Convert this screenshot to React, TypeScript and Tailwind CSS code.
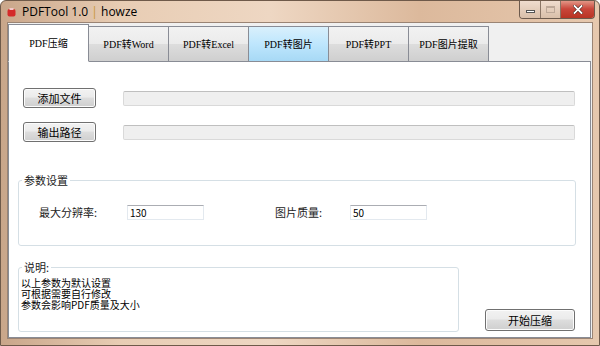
const tabs = ["PDF压缩", "PDF转Word", "PDF转Excel", "PDF转图片", "PDF转PPT", "PDF图片提取"];

function WinButton({ label, className }: { label: string; className?: string }) {
  return (
    <div
      className={
        "flex items-center justify-center rounded-[3px] border border-[#707070] bg-[linear-gradient(#f2f2f2_0%,#ebebeb_45%,#dddddd_50%,#cfcfcf_100%)] text-[11px] text-black shadow-[inset_0_0_0_1px_#fcfcfc] " +
        (className ?? "")
      }
    >
      {label}
    </div>
  );
}

function GroupBox({ title, className, children }: { title: string; className?: string; children?: React.ReactNode }) {
  return (
    <div className={"relative rounded-[3px] border border-[#d5dfe5] " + (className ?? "")}>
      <span className="absolute left-[3px] top-[-8px] bg-white px-[2px] text-[11px] leading-[14px] text-[#222]">{title}</span>
      {children}
    </div>
  );
}

export default function App() {
  return (
    <div className="flex h-[346px] w-[600px] flex-col overflow-hidden rounded-t-[6px] border border-[#6f5a4a] bg-[linear-gradient(90deg,#c9a68a_0%,#e8cdb4_20%,#eed7c3_45%,#dcb99c_70%,#e6c8ae_100%)] font-['Noto_Sans_CJK_SC',sans-serif]">
      {/* title bar */}
      <div className="relative flex h-[21px] items-center">
        <svg width="9" height="9" viewBox="0 0 9 9" className="ml-[6px] mt-[1px]">
          <rect x="0.5" y="1" width="8" height="7.5" rx="2" fill="#d42a2a" />
          <rect x="2.5" y="0" width="4" height="2" fill="#f3c7c7" />
        </svg>
        <span className="ml-[6px] font-['Open_Sans',sans-serif] text-[12px] leading-none text-black">
          PDFTool 1.0 <span className="text-[#c8973e]">|</span> howze
        </span>
        <div className="absolute right-[4px] top-[-1px] flex h-[19px] overflow-hidden rounded-b-[4px] border border-t-0 border-[#6c5a4d]">
          <div className="flex w-[21px] items-center justify-center border-r border-[#8a7565] bg-[linear-gradient(#f1ded0,#d9bfa9)]">
            <div className="mt-[4px] h-[3px] w-[9px] border border-[#555] bg-white" />
          </div>
          <div className="flex w-[20px] items-center justify-center border-r border-[#8a7565] bg-[linear-gradient(#f1ded0,#d9bfa9)]">
            <div className="h-[7px] w-[9px] border border-[#bda898] border-t-2" />
          </div>
          <div className="flex w-[33px] items-center justify-center bg-[linear-gradient(#e6a08f,#c9463a_50%,#b83424)]">
            <svg width="10" height="9" viewBox="0 0 10 9">
              <path d="M1.5 1 L8.5 8 M8.5 1 L1.5 8" stroke="#3c1b14" strokeWidth="3" strokeLinecap="square" />
              <path d="M1.5 1 L8.5 8 M8.5 1 L1.5 8" stroke="#ffffff" strokeWidth="1.8" strokeLinecap="square" />
            </svg>
          </div>
        </div>
      </div>

      {/* client area */}
      <div className="mx-[6px] mb-[6px] flex flex-1 flex-col border border-[#9a8474] bg-[#f0f0f0]">
        {/* tab strip */}
        <div className="flex h-[38px] items-end">
          {tabs.map((t, i) => {
            const selected = i === 0;
            const hover = i === 3;
            return (
              <div
                key={t}
                className={
                  "relative -mb-px flex items-center justify-center border border-[#898c95] font-['Liberation_Serif','Noto_Sans_CJK_SC',serif] text-[10px] text-black " +
                  (selected
                    ? "z-10 h-[38px] w-[81px] border-b-white bg-white"
                    : hover
                      ? "ml-[-1px] h-[36px] w-[81px] border-[#3c7fb1] bg-[linear-gradient(#d9f0fc,#bee6fd_50%,#a7d9f5)]"
                      : "ml-[-1px] h-[36px] w-[81px] bg-[linear-gradient(#f2f2f2,#ebebeb_50%,#dddddd_50%,#cfcfcf)]")
                }
              >
                {t}
              </div>
            );
          })}
        </div>

        {/* tab page */}
        <div className="mr-[1px] flex flex-1 flex-col border border-[#898c95] bg-white pt-[26px]">
          <div className="flex items-center">
            <WinButton label="添加文件" className="ml-[14px] h-[20px] w-[73px]" />
            <div className="ml-[27px] h-[15px] w-[452px] rounded-[2px] border border-[#d9d9d9] border-t-[#bfbfbf] bg-[#efefef]" />
          </div>
          <div className="mt-[14px] flex items-center">
            <WinButton label="输出路径" className="ml-[14px] h-[20px] w-[73px]" />
            <div className="ml-[27px] h-[15px] w-[452px] rounded-[2px] border border-[#d9d9d9] border-t-[#bfbfbf] bg-[#efefef]" />
          </div>

          <GroupBox title="参数设置" className="ml-[9px] mt-[38px] h-[66px] w-[558px]">
            <div className="mt-[23px] flex items-center text-[11px] text-[#222]">
              <span className="ml-[20px] w-[88px]">最大分辨率:</span>
              <div className="h-[15px] w-[77px] border border-[#e3e9ef] border-t-[#abadb3] bg-white pl-[2px] text-[10px] leading-[13px] text-black">130</div>
              <span className="ml-[71px] w-[75px]">图片质量:</span>
              <div className="h-[15px] w-[77px] border border-[#e3e9ef] border-t-[#abadb3] bg-white pl-[2px] text-[10px] leading-[13px] text-black">50</div>
            </div>
          </GroupBox>

          <div className="mt-[21px] flex items-end">
            <GroupBox title="说明:" className="ml-[9px] h-[65px] w-[441px]">
              <div className="ml-[2px] mt-[9px] text-[10px] leading-[11px] text-black">
                <div>以上参数为默认设置</div>
                <div>可根据需要自行修改</div>
                <div>参数会影响PDF质量及大小</div>
              </div>
            </GroupBox>
            <WinButton label="开始压缩" className="mb-[1px] ml-[26px] h-[22px] w-[90px]" />
          </div>
        </div>
      </div>
    </div>
  );
}
